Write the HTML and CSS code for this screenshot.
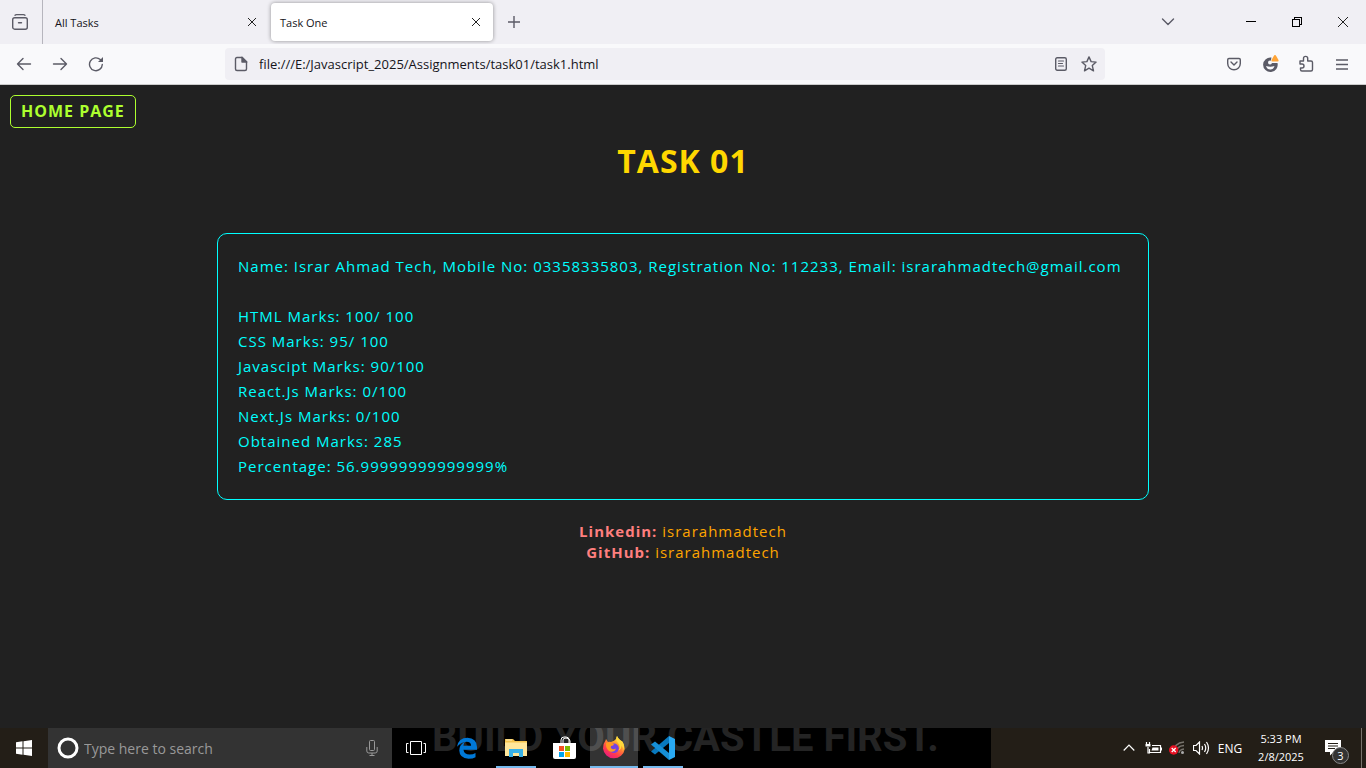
FILE: index.html
```html
<!DOCTYPE html>
<html lang="en">
<head>
<meta charset="utf-8">
<title>Task One</title>
<link rel="stylesheet" href="styles.css">
</head>
<body>
<div class="desktop">
  <header class="tabbar">
    <button class="recent" aria-label="Recent browsing">
      <svg width="16" height="16" viewBox="0 0 16 16" class="line"><path d="M3 1.2Q3.5.7 4.500.7H11.500Q12.500.7 13 1.200" stroke-width="1.300"/><rect x=".7" y="3.700" width="14.600" height="11.500" rx="2"/><path d="M6.500 8.700h3"/></svg>
    </button>
    <div class="tab"><span class="tab-title">All Tasks</span>
      <button class="close" aria-label="Close All Tasks"><svg width="10" height="10" viewBox="0 0 10 10" class="dark"><path d="M1 1l8 8M9 1L1 9"/></svg></button></div>
    <div class="tab tab-active"><span class="tab-title">Task One</span>
      <button class="close" aria-label="Close Task One"><svg width="10" height="10" viewBox="0 0 10 10" class="dark"><path d="M1 1l8 8M9 1L1 9"/></svg></button></div>
    <button class="newtab" aria-label="New tab"><svg width="12" height="12" viewBox="0 0 12 12" class="line"><path d="M6 0v12M0 6h12"/></svg></button>
    <div class="window-controls">
      <button class="list" aria-label="List all tabs"><svg width="14" height="8" viewBox="0 0 14 8" class="line"><path d="M1.500 1L7 6.500 12.500 1"/></svg></button>
      <button aria-label="Minimize"><svg width="10" height="10" viewBox="0 0 10 10" class="crisp"><path d="M0 4.500h10"/></svg></button>
      <button aria-label="Restore"><svg width="10" height="10" viewBox="0 0 10 10" class="crisp"><path d="M.5 2.500h7v7h-7zM2.500 2.500v-2h7v7h-2"/></svg></button>
      <button aria-label="Close window"><svg width="10" height="10" viewBox="0 0 10 10" class="dark"><path d="M0 0l10 10M10 0L0 10"/></svg></button>
    </div>
  </header>

  <nav class="toolbar" aria-label="Navigation">
    <div class="nav-buttons">
      <button aria-label="Back"><svg width="16" height="14" viewBox="0 0 16 14" class="line"><path d="M14.500 7H1.500M7 1.500L1.500 7 7 12.500"/></svg></button>
      <button aria-label="Forward"><svg width="16" height="14" viewBox="0 0 16 14" class="line"><path d="M1.500 7h13M9 1.500L14.500 7 9 12.500"/></svg></button>
      <button aria-label="Reload"><svg width="16" height="16" viewBox="0 0 16 16" class="line"><path d="M14.300 8.500A6.400 6.400 0 1 1 12.300 3.600"/><path d="M15 1v5h-5z" fill="#5b5b66" stroke="none"/></svg></button>
    </div>
    <div class="urlbar">
      <svg width="14" height="16" viewBox="0 0 14 16" class="line"><path d="M8 1.500H3Q1.500 1.500 1.500 3v10Q1.500 14.500 3 14.500h8q1.500 0 1.500-1.500V6z"/><path d="M8 1.200V6h4.800z" fill="#5b5b66"/></svg>
      <input class="url" aria-label="Address" value="file:///E:/Javascript_2025/Assignments/task01/task1.html">
      <button aria-label="Reader view"><svg width="12" height="14" viewBox="0 0 12 14" class="line"><rect x=".7" y=".7" width="10.600" height="12.600" rx="1.500"/><path d="M3.500 4h5M3.500 6.500h4M3.500 9h5" stroke-width="1.200"/></svg></button>
      <button aria-label="Bookmark"><svg width="16" height="16" viewBox="0 0 16 16" class="line"><path d="M8 .9l2.100 4.700 5 .5-3.800 3.500 1.200 5.200L8 12.200l-4.500 2.600 1.200-5.200L.9 6.100l5-.5z"/></svg></button>
    </div>
    <div class="actions">
      <button aria-label="Pocket"><svg width="14" height="14" viewBox="0 0 14 14" class="line"><path d="M2 1.500h10q1.300 0 1.300 1.300V6.500a6.300 6.300 0 0 1-12.600 0V2.800Q.7 1.500 2 1.500zM4 5l3 3 3-3"/></svg></button>
      <button aria-label="Extension"><svg width="18" height="18" viewBox="0 0 18 18"><path d="M10.500 2.500A7.300 7.300 0 1 0 16.500 8H11Q9 7.500 10.500 2.500z" fill="#5b5b66"/><path d="M5 11q4.500 1.500 8.500 0-1 3.500-4.200 3.500T5 11z" fill="#f9f9fb"/><circle cx="9" cy="7.500" r="2" fill="#f9f9fb"/><path d="M14 0q.8 0 1.200 1l2.300 4q.5 1.500-1 1.500h-5q-1.500 0-1-1.500l2.300-4q.4-1 1.200-1z" fill="#ffa436"/></svg></button>
      <button aria-label="Extensions"><svg width="16" height="18" viewBox="0 0 16 18" class="line"><path d="M2 6h3.500V3.500a2.100 2.100 0 0 1 4.200 0V6H13q1.500 0 1.500 1.500v7q0 1.500-1.500 1.500H4q-1.500 0-1.500-1.500V13H4a2 2 0 0 0 0-4H2z"/></svg></button>
      <button aria-label="Menu"><svg width="12" height="11" viewBox="0 0 12 11" class="line"><path d="M0 1h12M0 5.500h12M0 10h12"/></svg></button>
    </div>
  </nav>

  <main class="page">
    <a class="home" href="#">HOME PAGE</a>
    <h1>TASK 01</h1>
    <section class="card">
      <p class="person">Name: Israr Ahmad Tech, Mobile No: 03358335803, Registration No: 112233, Email: israrahmadtech@gmail.com</p>
      <p>HTML Marks: 100/ 100</p>
      <p>CSS Marks: 95/ 100</p>
      <p>Javascipt Marks: 90/100</p>
      <p>React.Js Marks: 0/100</p>
      <p>Next.Js Marks: 0/100</p>
      <p>Obtained Marks: 285</p>
      <p>Percentage: 56.99999999999999%</p>
    </section>
    <footer class="social">
      <p><b>Linkedin:</b> <a href="#">israrahmadtech</a></p>
      <p><b>GitHub:</b> <a href="#">israrahmadtech</a></p>
    </footer>
  </main>

  <div class="taskbar">
    <button class="start" aria-label="Start"><svg width="16" height="16" viewBox="0 0 16 16" fill="#fff"><path d="M0 2.200L6.500 1.300V7.500H0zM7.500 1.200L16 0v7.500H7.500zM0 8.500h6.500v6.200L0 13.800zM7.500 8.500H16V16l-8.500-1.200z"/></svg></button>
    <div class="search">
      <svg width="22" height="22" viewBox="0 0 22 22"><circle cx="11" cy="11" r="9" fill="none" stroke="#fff" stroke-width="3"/></svg>
      <input aria-label="Search" placeholder="Type here to search">
      <svg width="12" height="16" viewBox="0 0 12 16" fill="none" stroke="#999"><rect x="3.500" y=".5" width="5" height="10" rx="1"/><path d="M.8 7v4q0 2 2 2h6.400q2 0 2-2V7M6 13v2.500M3.500 15.500h5"/></svg>
    </div>
    <div class="apps">
      <span class="wallpaper">BUILD YOUR CASTLE FIRST.</span>
      <button class="app" aria-label="Task view"><svg width="20" height="14" viewBox="0 0 20 14" fill="none" stroke="#fff"><path d="M4.500.5h11v13h-11zM2.500 2.500h-2v9h2M17.500 2.500h2v9h-2"/></svg></button>
      <button class="app" aria-label="Edge"><svg width="22" height="22" viewBox="0 0 22 22"><path d="M1 9.800Q2.500.8 11.500.8 20.500 1 21 10v2.700H7.500q.4 4.800 6.200 4.800 3.300 0 5.800-1.600v4.300Q17 21.700 12.500 21.700 3.500 21.300 3.300 13.500q0-5.500 5.700-8.700Q7.700 6.200 7.400 8.800h7.700q0-4-4.600-4Q5 5 1 9.800z" fill="#0078d7"/></svg></button>
      <button class="app running" aria-label="File Explorer"><svg width="22" height="20" viewBox="0 0 22 20"><path d="M0 1h8l2 2h12v15H0z" fill="#f4c34e"/><path d="M0 4.500h22V18H0z" fill="#ffe69a"/><path d="M1 2h6" stroke="#fff2bd"/><path d="M4 19v-8h14v8h-4v-4H8v4z" fill="#38b1e7"/></svg></button>
      <button class="app" aria-label="Microsoft Store"><svg width="24" height="24" viewBox="0 0 24 24"><path d="M8 7V4q0-3 3-3h2q3 0 3 3v3M10 7V4q0-2 3-2 4 0 4 3v2" fill="none" stroke="#fff"/><path d="M0 7h23v14q0 2-2 2H2q-2 0-2-2z" fill="#fff"/><path d="M6 10h5v5H6z" fill="#f25022"/><path d="M12 10h5v5h-5z" fill="#7fba00"/><path d="M6 16h5v5H6z" fill="#00a4ef"/><path d="M12 16h5v5h-5z" fill="#ffb900"/></svg></button>
      <button class="app running current" aria-label="Firefox"><svg width="24" height="24" viewBox="0 0 24 24"><defs><linearGradient id="fox" x1=".8" y1="0" x2=".2" y2="1"><stop offset="0" stop-color="#fff44f"/><stop offset=".35" stop-color="#ff9a2b"/><stop offset=".7" stop-color="#ff3b4e"/><stop offset="1" stop-color="#e31587"/></linearGradient></defs><path d="M15 0q1 2.500 3.500 4.500l1.500 1q3 4 2.800 7.500A11 11 0 0 1 1 12.500Q.7 8 3.500 4.500L4 3l2 3q1.500-.6 3 0 3.500-1 5-3z" fill="url(#fox)"/><circle cx="12" cy="12.300" r="4.800" fill="#7543e3"/><path d="M4 7q4-2 8 1.200-.5 1.500-3 1.800-1 2 1 3 2 .8 4-.5-1.500 4-6 3Q3.500 13.500 4 7z" fill="#ff9b21"/><path d="M15 0q-2 3.500 1 7 3 3.500.5 7.500 3-1 3-5 2 2 1 6 3-5 0-10Q16 3 15 0z" fill="#ffd83b"/></svg></button>
      <button class="app running" aria-label="Visual Studio Code"><svg width="24" height="24" viewBox="0 0 24 24"><path d="M18 0l6 3v18l-6 3z" fill="#29a9f2"/><path d="M18 0v7L4 18.500 0 15.500z" fill="#0879be"/><path d="M18 24v-7L4 5.500 0 8.500z" fill="#168fd6"/></svg></button>
    </div>
    <div class="tray">
      <button aria-label="Show hidden icons"><svg width="12" height="8" viewBox="0 0 12 8" class="white"><path d="M.7 6.500L6 1.200l5.300 5.300"/></svg></button>
      <button aria-label="Battery"><svg width="17" height="13" viewBox="0 0 17 13" class="white"><path d="M7 3.500h8.500v7h-11V7"/><path d="M7.500 5.500h6v3h-7z" fill="#fff" stroke="none"/><path d="M16.500 5.500v3M1.500 0v2M4.500 0v2M3 5v6h2"/><path d="M.5 2h5v2.500h-5z" fill="#fff" stroke="none"/></svg></button>
      <button aria-label="Network"><svg width="16" height="14" viewBox="0 0 16 14"><g fill="none" stroke="#77736c" stroke-width="1.300"><path d="M4 12Q5 2 15 1M7 12Q7.500 5 15 4.500M10 12Q10.500 8.500 15 8"/></g><circle cx="13.500" cy="11.500" r="1.500" fill="#aaa"/><circle cx="4.700" cy="9" r="4.700" fill="#e81123"/><path d="M2.700 7l4 4M6.700 7l-4 4" stroke="#fff" stroke-width="1.300"/></svg></button>
      <button aria-label="Volume"><svg width="17" height="14" viewBox="0 0 17 14" class="white"><path d="M.5 4.500H3L6.500 1v12L3 9.500H.5zM9 5q1 2 0 4M11.500 3q2.500 4 0 8M13.500 1q4 6 0 12"/></svg></button>
      <button class="lang">ENG</button>
      <button class="clock"><span>5:33 PM</span><span>2/8/2025</span></button>
      <button class="notify" aria-label="3 notifications"><svg width="16" height="16" viewBox="0 0 16 16"><path d="M0 0h16v12H8.500L5 15.500V12H0z" fill="#fff"/><path d="M3 3.500h10M3 6h10M3 8.500h7" stroke="#231e17"/></svg><span class="badge">3</span></button>
      <span class="peek"></span>
    </div>
  </div>
</div>
</body>
</html>
```
FILE: styles.css
```css
* { box-sizing: border-box; }
body { margin: 0; font-family: "Open Sans", "Noto Sans", sans-serif; font-size: 12px; color: #15141a; }
button { display: flex; align-items: center; justify-content: center; margin: 0; padding: 0; border: 0; background: none; color: inherit; font: inherit; }
input { min-width: 0; flex: 1; padding: 0; border: 0; outline: 0; background: none; font: inherit; color: inherit; }
svg { display: block; flex: none; }
p, h1 { margin: 0; }
.line { fill: none; stroke: #5b5b66; stroke-width: 1.4; stroke-linejoin: round; stroke-linecap: round; }
.dark { fill: none; stroke: #222; stroke-width: 1; }
.crisp { fill: none; stroke: #000; shape-rendering: crispEdges; }
.white { fill: none; stroke: #fff; stroke-width: 1.2; }

.desktop { display: flex; flex-direction: column; min-height: 100vh; background: #212121; }

.tabbar { display: flex; height: 44px; background: #f0eff4; }
.recent { width: 43px; padding-right: 2px; border-right: 1px solid #b6b5bd; }
.tab { display: flex; align-items: center; width: 222px; margin: 3px 0; padding: 0 8px 0 9px; border-radius: 4px; font-size: 11px; }
.tab:not(.tab-active) { margin-left: 3px; margin-right: 3px; padding-right: 7px; }
.tab-active { background: #fff; box-shadow: 0 0 4px rgba(0, 0, 0, .4); }
.tab-title { flex: 1; }
.close { width: 18px; height: 24px; }
.newtab { width: 42px; }
.window-controls { display: flex; margin-left: auto; }
.window-controls button { width: 46px; }
.window-controls .list { width: 40px; margin-right: 40px; }

.toolbar { display: flex; align-items: center; height: 41px; padding-right: 6px; background: #f9f9fb; border-bottom: 1px solid #ccc; }
.nav-buttons { display: flex; flex: 0 1 225px; padding-left: 6px; }
.nav-buttons button, .actions button { width: 36px; height: 32px; }
.urlbar { display: flex; align-items: center; flex: 0 1 880px; height: 32px; padding: 0 2px 0 9px; border-radius: 4px; background: #f0eff4; font-size: 13px; }
.urlbar button { width: 28px; height: 28px; }
.url { height: 28px; margin-left: 11px; }
.actions { display: flex; margin-left: auto; }

.page { display: flex; flex: 1; flex-direction: column; align-items: center; padding: 10px; font-size: 15px; letter-spacing: 1px; }
.home { align-self: flex-start; padding: 5px 10px; border: 1px solid #adff2f; border-radius: 5px; color: #adff2f; font-size: 16px; font-weight: 700; line-height: 21px; text-decoration: none; }
h1 { margin-top: 11px; color: #ffd700; font-size: 32px; line-height: 43px; }
.card { width: 932px; max-width: 100%; margin-top: 51px; padding: 20px; border: 1px solid #0ff; border-radius: 10px; color: #0ff; line-height: 25px; }
.person { margin-bottom: 25px; }
.social { margin-top: 21px; color: #ff7f7f; line-height: 21px; text-align: center; }
.social a { color: #ffa500; text-decoration: none; }

.taskbar { display: flex; height: 40px; background: #231e17; color: #fff; }
.start { width: 48px; }
.search { display: flex; align-items: center; flex: 0 1 344px; padding: 0 14px 0 9px; background: #333; color: #999; font-size: 14px; }
.search input { margin-left: 5px; }
.search input::placeholder { color: #999; opacity: 1; }
.apps { position: relative; display: flex; flex: 0 1 599px; gap: 1px; overflow: hidden; background: #000; }
.wallpaper { position: absolute; left: 40px; bottom: 10px; color: #242424; font-family: Roboto, sans-serif; font-size: 40px; font-weight: 700; line-height: 40px; white-space: nowrap; }
.app { position: relative; width: 48px; }
.app:nth-of-type(2) { margin-left: 2px; }
.running::after { content: ""; position: absolute; right: 4px; bottom: 0; left: 4px; height: 2px; background: #76b9ed; }
.current { background: rgba(255, 255, 255, .2); }
.current::after { right: 0; left: 0; }
.tray { display: flex; margin-left: auto; }
.tray button { width: 24px; }
.tray .lang { width: 34px; }
.tray .clock { flex-direction: column; width: 68px; font-size: 11px; line-height: 18px; }
.tray .notify { position: relative; width: 36px; }
.badge { position: absolute; right: 2px; bottom: 4px; width: 17px; height: 17px; border: 1px solid #888; border-radius: 50%; background: #333; font-size: 11px; line-height: 15px; text-align: center; }
.peek { width: 5px; margin-left: 10px; border-left: 1px solid #77736c; }
```
